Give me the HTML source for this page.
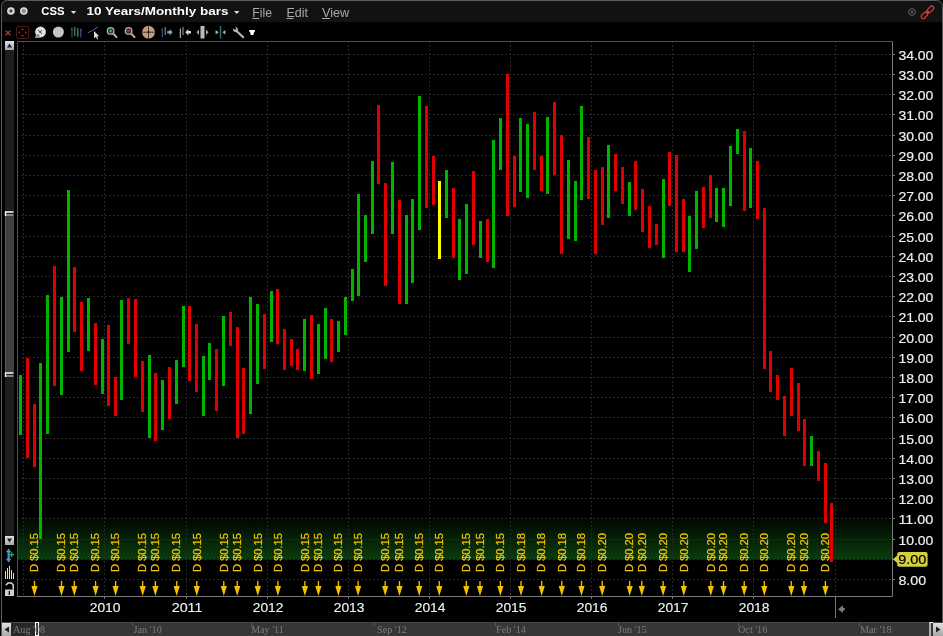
<!DOCTYPE html><html><head><meta charset="utf-8"><style>html,body{margin:0;padding:0;background:#000;width:943px;height:636px;overflow:hidden}svg{display:block;will-change:transform}text{font-family:"Liberation Sans",sans-serif}text.serif{font-family:"Liberation Serif",serif}</style></head><body>
<svg width="943" height="636" viewBox="0 0 943 636">
<defs><linearGradient id="band" x1="0" y1="0" x2="0" y2="1"><stop offset="0" stop-color="#010701"/><stop offset="1" stop-color="#0a3c0e"/></linearGradient><linearGradient id="btn" x1="0" y1="0" x2="0" y2="1"><stop offset="0" stop-color="#e0e0e0"/><stop offset="1" stop-color="#a8a8a8"/></linearGradient><radialGradient id="wbtn" cx="0.5" cy="0.4" r="0.6"><stop offset="0" stop-color="#c8c8c8"/><stop offset="1" stop-color="#707070"/></radialGradient></defs>
<rect width="943" height="636" fill="#000"/>
<path d="M1.5 636 V6.5 Q1.5 0.5 7.5 0.5 H936.5 Q942.5 0.5 942.5 6.5 V636" fill="#121212" stroke="#5c5c5c" stroke-width="1"/>
<rect x="2" y="22" width="940" height="614" fill="#000"/>
<circle cx="10.9" cy="11" r="3.8" fill="#dcdcdc"/><circle cx="10.9" cy="11" r="2.2" fill="#9a9a9a"/><rect x="10" y="10.1" width="1.8" height="1.8" fill="#2a2a2a"/>
<circle cx="23.8" cy="11" r="3.8" fill="#dcdcdc"/><circle cx="23.8" cy="11" r="2.3" fill="#8e8e8e"/>
<text x="41.3" y="15.3" font-weight="bold" font-size="11.6" fill="#fff" textLength="23.2" lengthAdjust="spacingAndGlyphs">CSS</text>
<path d="M70.8 11 H76.3 L73.55 14 Z" fill="#ddd"/>
<text x="86.5" y="15.3" font-weight="bold" font-size="11.8" fill="#fff" textLength="142" lengthAdjust="spacingAndGlyphs">10 Years/Monthly bars</text>
<path d="M234 11 H239.5 L236.75 14 Z" fill="#ddd"/>
<text x="252.3" y="16.5" font-size="12" fill="#a8a8a8" textLength="19.7" lengthAdjust="spacingAndGlyphs">File</text>
<rect x="252.3" y="18" width="7" height="1" fill="#a8a8a8"/>
<text x="286.5" y="16.5" font-size="12" fill="#a8a8a8" textLength="21.5" lengthAdjust="spacingAndGlyphs">Edit</text>
<rect x="286.5" y="18" width="7" height="1" fill="#a8a8a8"/>
<text x="322" y="16.5" font-size="12" fill="#a8a8a8" textLength="27.3" lengthAdjust="spacingAndGlyphs">View</text>
<rect x="322" y="18" width="8" height="1" fill="#a8a8a8"/>
<g fill="none" stroke="#6a6a6a" stroke-width="0.9"><circle cx="912" cy="12" r="3.4"/><circle cx="912" cy="12" r="1.2"/></g>
<g fill="none" stroke="#e04848" stroke-width="1.1"><rect x="-2" y="-4" width="4" height="8" rx="2" transform="translate(924.6 15.2) rotate(45)"/><rect x="-2" y="-4" width="4" height="8" rx="2" transform="translate(930.4 9.4) rotate(45)"/><path d="M926.2 13.6 L928.8 11"/></g>
<g>
<path d="M5.5 30.5 L10.5 35.5 M10.5 30.5 L5.5 35.5" stroke="#9a3c3c" stroke-width="1.4"/>
<rect x="16.5" y="26.5" width="12" height="12" rx="1.5" fill="none" stroke="#4a1818"/>
<path d="M22.5 28 L21 30 H24 Z M22.5 37 L21 35 H24 Z M18 32.5 L20 31 V34 Z M27 32.5 L25 31 V34 Z" fill="#8a2a2a"/>
<circle cx="40.5" cy="32" r="5.4" fill="#d8e2ea"/><path d="M38 30 L42 34 M42 30 L39.5 32.5" stroke="#333" stroke-width="0.9"/><path d="M35 38 Q35.5 33.5 39 34 L40 38 Z" fill="#c08a66"/>
<circle cx="58.4" cy="32" r="5.5" fill="#c4c4c4"/>
<path d="M72 27.5 V37.5 M80.8 28.5 V37.5" stroke="#4060a8" stroke-width="1"/><path d="M74.8 27 V36 M77.8 28 V37" stroke="#5a9a5a" stroke-width="1.1"/><path d="M71 29 H72 M80.8 30 H82 M73.8 30 H74.8 M77.8 34 H78.8" stroke="#6a8ac0" stroke-width="0.8"/>
<path d="M88 33 L98 27" stroke="#4a6a90" stroke-width="1"/><path d="M94 31 V38.5 L95.8 36.8 L97.2 39.5 L98.2 39 L96.9 36.4 L99.2 36.2 Z" fill="#ddd"/>
<path d="M113.2 33.6 L117 37.6" stroke="#d8b088" stroke-width="2"/><circle cx="110.6" cy="30.9" r="3.3" fill="#2a3434" stroke="#a8b0b0" stroke-width="1.3"/><path d="M109.1 30.9 H112.1 M110.6 29.4 V32.4" stroke="#38b838" stroke-width="1.1"/>
<path d="M131.2 33.6 L135 37.6" stroke="#d8b088" stroke-width="2"/><circle cx="128.6" cy="30.9" r="3.3" fill="#343030" stroke="#a8b0b0" stroke-width="1.3"/><path d="M126.9 30.9 H130.3" stroke="#c84030" stroke-width="1.3"/>
<circle cx="148.5" cy="32.2" r="6.4" fill="#c89c80"/><path d="M148.5 26.2 V38.2 M142.5 32.2 H154.5" stroke="#2a1e18" stroke-width="0.8"/><circle cx="148.5" cy="32.2" r="1" fill="#111"/>
<path d="M162.3 28.5 V37" stroke="#4a62b0" stroke-width="1"/><path d="M161.5 29.5 H162.3 M162.3 36 H163" stroke="#4a62b0" stroke-width="0.8"/><path d="M165.2 27 V35" stroke="#5e9a60" stroke-width="1.2"/><path d="M167.3 31 H169.8 V29 L172.5 32.3 L169.8 35.5 V33.5 H167.3 Z" fill="#8aa4c0"/>
<path d="M180.3 28.5 V38" stroke="#cfcfcf" stroke-width="1"/><path d="M183 27 V35" stroke="#8a8a8a" stroke-width="1.2"/><path d="M191 31 H188.3 V29 L185.3 32.3 L188.3 35.5 V33.5 H191 Z" fill="#d8d8d8"/>
<rect x="200.5" y="26" width="4" height="12.5" fill="#bbb"/><path d="M199 29.5 L196.5 32.2 L199 35 Z M206 29.5 L208.5 32.2 L206 35 Z" fill="#aaa"/>
<path d="M220.5 26 V38.5" stroke="#3a6a84" stroke-width="1.4"/><path d="M215.6 30 L218.6 32.2 L215.6 34.4 Z M225.4 30 L222.4 32.2 L225.4 34.4 Z" fill="#98c498"/>
<path d="M236.5 31 L243.2 37.2" stroke="#b4b8c4" stroke-width="2.2" stroke-linecap="round"/><path d="M233 28.8 Q232.8 32 236 32.2 Q238.2 32 238 29.4 Q237.6 27.2 235 26.8 L236.2 28.6 L235.2 30 L233.2 28.4 Z" fill="#b4b8c4"/>
<path d="M249.2 30 H255 V31.7 H254.2 L253.4 34.9 H250.8 L250 31.7 H249.2 Z" fill="#fff"/>
</g>
<rect x="5" y="50" width="9" height="486" fill="#1e1e1e"/>
<rect x="5" y="216" width="9" height="156" fill="#404040"/><rect x="5" y="216" width="1" height="156" fill="#5a5a5a"/>
<path d="M5.5 216 V212 H13.5" stroke="#fff" stroke-width="1.4" fill="none"/><path d="M6 215 H13.5" stroke="#c8c8c8" stroke-width="1.2"/>
<path d="M5.5 377 V373 H13.5" stroke="#fff" stroke-width="1.4" fill="none"/><path d="M6 376 H13.5" stroke="#c8c8c8" stroke-width="1.2"/>
<rect x="5" y="41" width="9" height="9" fill="url(#btn)"/><path d="M7 47.5 H12 L9.5 43.5 Z" fill="#10203a"/>
<rect x="5" y="536" width="9" height="9" fill="url(#btn)"/><path d="M7 538.5 H12 L9.5 542.5 Z" fill="#10203a"/>
<path d="M8.6 548.5 L5.8 552.3 H7.5 V558.7 H5.8 L8.6 562.5 L11.4 558.7 H9.7 V552.3 H11.4 Z" fill="#4a94d8"/><path d="M9.3 554.6 H14 M11.65 552.3 V556.9" stroke="#18c038" stroke-width="1.3"/>
<path d="M5.5 579 V571 M7.5 579 V568 M9.5 579 V566 M11.5 579 V570 M13.5 579 V573" stroke="#ddd" stroke-width="1"/>
<rect x="5" y="589.5" width="9" height="6.5" fill="#d0d0d0"/><rect x="8.7" y="591" width="1.3" height="4" fill="#111"/><path d="M5.8 585.2 L8 583 H11.4 L13.2 584.8 V589.5" stroke="#d8d8d8" stroke-width="1.5" fill="none"/>
<rect x="18" y="518.8" width="874" height="40.6" fill="url(#band)"/>
<path d="M18 579.5 H892 M18 559.5 H892 M18 539.5 H892 M18 518.5 H892 M18 498.5 H892 M18 478.5 H892 M18 458.5 H892 M18 438.5 H892 M18 417.5 H892 M18 397.5 H892 M18 377.5 H892 M18 357.5 H892 M18 337.5 H892 M18 316.5 H892 M18 296.5 H892 M18 276.5 H892 M18 256.5 H892 M18 236.5 H892 M18 215.5 H892 M18 195.5 H892 M18 175.5 H892 M18 155.5 H892 M18 135.5 H892 M18 114.5 H892 M18 94.5 H892 M18 74.5 H892 M18 54.5 H892" stroke="#282828" stroke-width="1" stroke-dasharray="2 2" stroke-dashoffset="1"/>
<path d="M23.5 42 V596 M104.5 42 V596 M186.5 42 V596 M267.5 42 V596 M348.5 42 V596 M429.5 42 V596 M510.5 42 V596 M591.5 42 V596 M672.5 42 V596 M753.5 42 V596 M835.5 42 V596" stroke="#282828" stroke-width="1" stroke-dasharray="2 2" stroke-dashoffset="1"/>
<g fill="#00b400"><rect x="19" y="375" width="3" height="60"/><rect x="39" y="363" width="3" height="176"/><rect x="46" y="295" width="3" height="139"/><rect x="60" y="297" width="3" height="98"/><rect x="67" y="190" width="3" height="162"/><rect x="87" y="298" width="3" height="53"/><rect x="101" y="339" width="3" height="55"/><rect x="120" y="300" width="3" height="100"/><rect x="148" y="355" width="3" height="83"/><rect x="161" y="380" width="3" height="50"/><rect x="175" y="360" width="3" height="44"/><rect x="182" y="306" width="3" height="61"/><rect x="202" y="356" width="3" height="60"/><rect x="208" y="343" width="3" height="37"/><rect x="222" y="316" width="3" height="70"/><rect x="249" y="297" width="3" height="117"/><rect x="256" y="304" width="3" height="80"/><rect x="270" y="291" width="3" height="51"/><rect x="303" y="319" width="3" height="52"/><rect x="317" y="324" width="3" height="50"/><rect x="324" y="308" width="3" height="51"/><rect x="337" y="321" width="3" height="31"/><rect x="344" y="297" width="3" height="38"/><rect x="351" y="269" width="3" height="32"/><rect x="357" y="194" width="3" height="102"/><rect x="364" y="215" width="3" height="47"/><rect x="371" y="161" width="3" height="73"/><rect x="391" y="162" width="3" height="72"/><rect x="405" y="215" width="3" height="89"/><rect x="411" y="199" width="3" height="84"/><rect x="418" y="96" width="3" height="134"/><rect x="445" y="170" width="3" height="48"/><rect x="458" y="219" width="3" height="61"/><rect x="465" y="204" width="3" height="70"/><rect x="479" y="221" width="3" height="37"/><rect x="492" y="140" width="3" height="128"/><rect x="499" y="118" width="3" height="52"/><rect x="519" y="118" width="3" height="74"/><rect x="526" y="124" width="3" height="74"/><rect x="546" y="117" width="3" height="77"/><rect x="567" y="160" width="3" height="79"/><rect x="574" y="181" width="3" height="60"/><rect x="580" y="106" width="3" height="94"/><rect x="607" y="145" width="3" height="73"/><rect x="628" y="182" width="3" height="34"/><rect x="662" y="179" width="3" height="79"/><rect x="688" y="216" width="3" height="56"/><rect x="695" y="191" width="3" height="58"/><rect x="715" y="188" width="3" height="34"/><rect x="722" y="188" width="3" height="39"/><rect x="729" y="146" width="3" height="60"/><rect x="736" y="129" width="3" height="25"/><rect x="749" y="148" width="3" height="60"/><rect x="810" y="436" width="3" height="30"/></g>
<g fill="#e00000"><rect x="26" y="358" width="3" height="100"/><rect x="33" y="404" width="3" height="63"/><rect x="53" y="266" width="3" height="120"/><rect x="73" y="267" width="3" height="65"/><rect x="80" y="302" width="3" height="69"/><rect x="94" y="323" width="3" height="62"/><rect x="107" y="325" width="3" height="81"/><rect x="114" y="377" width="3" height="39"/><rect x="127" y="298" width="3" height="46"/><rect x="134" y="299" width="3" height="78"/><rect x="141" y="361" width="3" height="51"/><rect x="154" y="373" width="3" height="68"/><rect x="168" y="367" width="3" height="52"/><rect x="188" y="306" width="3" height="75"/><rect x="195" y="324" width="3" height="68"/><rect x="215" y="349" width="3" height="62"/><rect x="229" y="312" width="3" height="34"/><rect x="236" y="327" width="3" height="111"/><rect x="242" y="368" width="3" height="66"/><rect x="263" y="314" width="3" height="55"/><rect x="276" y="289" width="3" height="55"/><rect x="283" y="329" width="3" height="41"/><rect x="290" y="339" width="3" height="27"/><rect x="296" y="349" width="3" height="21"/><rect x="310" y="315" width="3" height="64"/><rect x="330" y="319" width="3" height="43"/><rect x="377" y="105" width="3" height="79"/><rect x="384" y="183" width="3" height="103"/><rect x="398" y="200" width="3" height="104"/><rect x="425" y="106" width="3" height="102"/><rect x="432" y="156" width="3" height="49"/><rect x="452" y="188" width="3" height="70"/><rect x="472" y="171" width="3" height="74"/><rect x="486" y="219" width="3" height="43"/><rect x="506" y="74" width="3" height="142"/><rect x="513" y="156" width="3" height="51"/><rect x="533" y="112" width="3" height="58"/><rect x="540" y="156" width="3" height="35"/><rect x="553" y="102" width="3" height="73"/><rect x="560" y="135" width="3" height="119"/><rect x="587" y="137" width="3" height="62"/><rect x="594" y="170" width="3" height="84"/><rect x="601" y="167" width="3" height="58"/><rect x="614" y="154" width="3" height="37"/><rect x="621" y="167" width="3" height="37"/><rect x="634" y="161" width="3" height="49"/><rect x="641" y="189" width="3" height="43"/><rect x="648" y="206" width="3" height="42"/><rect x="655" y="224" width="3" height="21"/><rect x="668" y="152" width="3" height="54"/><rect x="675" y="155" width="3" height="97"/><rect x="682" y="199" width="3" height="53"/><rect x="702" y="187" width="3" height="41"/><rect x="709" y="175" width="3" height="43"/><rect x="743" y="131" width="3" height="80"/><rect x="756" y="161" width="3" height="58"/><rect x="763" y="208" width="3" height="161"/><rect x="769" y="351" width="3" height="41"/><rect x="776" y="375" width="3" height="25"/><rect x="783" y="396" width="3" height="40"/><rect x="790" y="368" width="3" height="48"/><rect x="797" y="383" width="3" height="48"/><rect x="803" y="419" width="3" height="47"/><rect x="817" y="451" width="3" height="30"/><rect x="824" y="463" width="3" height="60"/><rect x="830" y="503" width="3" height="59"/></g>
<g fill="#ffff00"><rect x="438" y="181" width="3" height="78"/></g>
<text transform="translate(38.2 572) rotate(-90)" font-size="10.5" fill="#f2c200" stroke="#f2c200" stroke-width="0.25" textLength="39" lengthAdjust="spacingAndGlyphs">D $0.15</text>
<path d="M33.85 581 H35.15 V586 H37.6 L34.5 596 L31.4 586 H33.85 Z" fill="#f2c200"/>
<text transform="translate(65.2 572) rotate(-90)" font-size="10.5" fill="#f2c200" stroke="#f2c200" stroke-width="0.25" textLength="39" lengthAdjust="spacingAndGlyphs">D $0.15</text>
<path d="M60.85 581 H62.15 V586 H64.6 L61.5 596 L58.4 586 H60.85 Z" fill="#f2c200"/>
<text transform="translate(78.0 572) rotate(-90)" font-size="10.5" fill="#f2c200" stroke="#f2c200" stroke-width="0.25" textLength="39" lengthAdjust="spacingAndGlyphs">D $0.15</text>
<path d="M73.65 581 H74.95000000000002 V586 H77.4 L74.30000000000001 596 L71.20000000000002 586 H73.65 Z" fill="#f2c200"/>
<text transform="translate(99.3 572) rotate(-90)" font-size="10.5" fill="#f2c200" stroke="#f2c200" stroke-width="0.25" textLength="39" lengthAdjust="spacingAndGlyphs">D $0.15</text>
<path d="M94.95 581 H96.25000000000001 V586 H98.7 L95.60000000000001 596 L92.50000000000001 586 H94.95 Z" fill="#f2c200"/>
<text transform="translate(119.3 572) rotate(-90)" font-size="10.5" fill="#f2c200" stroke="#f2c200" stroke-width="0.25" textLength="39" lengthAdjust="spacingAndGlyphs">D $0.15</text>
<path d="M114.95 581 H116.25000000000001 V586 H118.7 L115.60000000000001 596 L112.50000000000001 586 H114.95 Z" fill="#f2c200"/>
<text transform="translate(146.4 572) rotate(-90)" font-size="10.5" fill="#f2c200" stroke="#f2c200" stroke-width="0.25" textLength="39" lengthAdjust="spacingAndGlyphs">D $0.15</text>
<path d="M142.05 581 H143.35000000000002 V586 H145.8 L142.70000000000002 596 L139.60000000000002 586 H142.05 Z" fill="#f2c200"/>
<text transform="translate(159.1 572) rotate(-90)" font-size="10.5" fill="#f2c200" stroke="#f2c200" stroke-width="0.25" textLength="39" lengthAdjust="spacingAndGlyphs">D $0.15</text>
<path d="M154.75 581 H156.05 V586 H158.5 L155.4 596 L152.3 586 H154.75 Z" fill="#f2c200"/>
<text transform="translate(180.4 572) rotate(-90)" font-size="10.5" fill="#f2c200" stroke="#f2c200" stroke-width="0.25" textLength="39" lengthAdjust="spacingAndGlyphs">D $0.15</text>
<path d="M176.05 581 H177.35000000000002 V586 H179.8 L176.70000000000002 596 L173.60000000000002 586 H176.05 Z" fill="#f2c200"/>
<text transform="translate(200.5 572) rotate(-90)" font-size="10.5" fill="#f2c200" stroke="#f2c200" stroke-width="0.25" textLength="39" lengthAdjust="spacingAndGlyphs">D $0.15</text>
<path d="M196.15 581 H197.45000000000002 V586 H199.9 L196.8 596 L193.70000000000002 586 H196.15 Z" fill="#f2c200"/>
<text transform="translate(227.5 572) rotate(-90)" font-size="10.5" fill="#f2c200" stroke="#f2c200" stroke-width="0.25" textLength="39" lengthAdjust="spacingAndGlyphs">D $0.15</text>
<path d="M223.15 581 H224.45000000000002 V586 H226.9 L223.8 596 L220.70000000000002 586 H223.15 Z" fill="#f2c200"/>
<text transform="translate(240.9 572) rotate(-90)" font-size="10.5" fill="#f2c200" stroke="#f2c200" stroke-width="0.25" textLength="39" lengthAdjust="spacingAndGlyphs">D $0.15</text>
<path d="M236.55 581 H237.85000000000002 V586 H240.3 L237.20000000000002 596 L234.10000000000002 586 H236.55 Z" fill="#f2c200"/>
<text transform="translate(261.5 572) rotate(-90)" font-size="10.5" fill="#f2c200" stroke="#f2c200" stroke-width="0.25" textLength="39" lengthAdjust="spacingAndGlyphs">D $0.15</text>
<path d="M257.15 581 H258.44999999999993 V586 H260.9 L257.79999999999995 596 L254.69999999999996 586 H257.15 Z" fill="#f2c200"/>
<text transform="translate(281.6 572) rotate(-90)" font-size="10.5" fill="#f2c200" stroke="#f2c200" stroke-width="0.25" textLength="39" lengthAdjust="spacingAndGlyphs">D $0.15</text>
<path d="M277.25 581 H278.54999999999995 V586 H281.0 L277.9 596 L274.79999999999995 586 H277.25 Z" fill="#f2c200"/>
<text transform="translate(308.6 572) rotate(-90)" font-size="10.5" fill="#f2c200" stroke="#f2c200" stroke-width="0.25" textLength="39" lengthAdjust="spacingAndGlyphs">D $0.15</text>
<path d="M304.25 581 H305.54999999999995 V586 H308.0 L304.9 596 L301.79999999999995 586 H304.25 Z" fill="#f2c200"/>
<text transform="translate(322.1 572) rotate(-90)" font-size="10.5" fill="#f2c200" stroke="#f2c200" stroke-width="0.25" textLength="39" lengthAdjust="spacingAndGlyphs">D $0.15</text>
<path d="M317.75 581 H319.04999999999995 V586 H321.5 L318.4 596 L315.29999999999995 586 H317.75 Z" fill="#f2c200"/>
<text transform="translate(342.1 572) rotate(-90)" font-size="10.5" fill="#f2c200" stroke="#f2c200" stroke-width="0.25" textLength="39" lengthAdjust="spacingAndGlyphs">D $0.15</text>
<path d="M337.75 581 H339.04999999999995 V586 H341.5 L338.4 596 L335.29999999999995 586 H337.75 Z" fill="#f2c200"/>
<text transform="translate(361.8 572) rotate(-90)" font-size="10.5" fill="#f2c200" stroke="#f2c200" stroke-width="0.25" textLength="39" lengthAdjust="spacingAndGlyphs">D $0.15</text>
<path d="M357.45 581 H358.74999999999994 V586 H361.2 L358.09999999999997 596 L354.99999999999994 586 H357.45 Z" fill="#f2c200"/>
<text transform="translate(388.90000000000003 572) rotate(-90)" font-size="10.5" fill="#f2c200" stroke="#f2c200" stroke-width="0.25" textLength="39" lengthAdjust="spacingAndGlyphs">D $0.15</text>
<path d="M384.55 581 H385.84999999999997 V586 H388.3 L385.2 596 L382.09999999999997 586 H384.55 Z" fill="#f2c200"/>
<text transform="translate(403.20000000000005 572) rotate(-90)" font-size="10.5" fill="#f2c200" stroke="#f2c200" stroke-width="0.25" textLength="39" lengthAdjust="spacingAndGlyphs">D $0.15</text>
<path d="M398.85 581 H400.15 V586 H402.6 L399.5 596 L396.4 586 H398.85 Z" fill="#f2c200"/>
<text transform="translate(422.90000000000003 572) rotate(-90)" font-size="10.5" fill="#f2c200" stroke="#f2c200" stroke-width="0.25" textLength="39" lengthAdjust="spacingAndGlyphs">D $0.15</text>
<path d="M418.55 581 H419.84999999999997 V586 H422.3 L419.2 596 L416.09999999999997 586 H418.55 Z" fill="#f2c200"/>
<text transform="translate(443.0 572) rotate(-90)" font-size="10.5" fill="#f2c200" stroke="#f2c200" stroke-width="0.25" textLength="39" lengthAdjust="spacingAndGlyphs">D $0.15</text>
<path d="M438.65 581 H439.94999999999993 V586 H442.4 L439.29999999999995 596 L436.19999999999993 586 H438.65 Z" fill="#f2c200"/>
<text transform="translate(470.0 572) rotate(-90)" font-size="10.5" fill="#f2c200" stroke="#f2c200" stroke-width="0.25" textLength="39" lengthAdjust="spacingAndGlyphs">D $0.15</text>
<path d="M465.65 581 H466.94999999999993 V586 H469.4 L466.29999999999995 596 L463.19999999999993 586 H465.65 Z" fill="#f2c200"/>
<text transform="translate(483.70000000000005 572) rotate(-90)" font-size="10.5" fill="#f2c200" stroke="#f2c200" stroke-width="0.25" textLength="39" lengthAdjust="spacingAndGlyphs">D $0.15</text>
<path d="M479.35 581 H480.65 V586 H483.1 L480.0 596 L476.9 586 H479.35 Z" fill="#f2c200"/>
<text transform="translate(504.1 572) rotate(-90)" font-size="10.5" fill="#f2c200" stroke="#f2c200" stroke-width="0.25" textLength="39" lengthAdjust="spacingAndGlyphs">D $0.15</text>
<path d="M499.75 581 H501.04999999999995 V586 H503.5 L500.4 596 L497.29999999999995 586 H499.75 Z" fill="#f2c200"/>
<text transform="translate(524.7 572) rotate(-90)" font-size="10.5" fill="#f2c200" stroke="#f2c200" stroke-width="0.25" textLength="39" lengthAdjust="spacingAndGlyphs">D $0.18</text>
<path d="M520.35 581 H521.65 V586 H524.1 L521.0 596 L517.9 586 H520.35 Z" fill="#f2c200"/>
<text transform="translate(545.4 572) rotate(-90)" font-size="10.5" fill="#f2c200" stroke="#f2c200" stroke-width="0.25" textLength="39" lengthAdjust="spacingAndGlyphs">D $0.18</text>
<path d="M541.05 581 H542.3499999999999 V586 H544.8 L541.6999999999999 596 L538.5999999999999 586 H541.05 Z" fill="#f2c200"/>
<text transform="translate(565.5 572) rotate(-90)" font-size="10.5" fill="#f2c200" stroke="#f2c200" stroke-width="0.25" textLength="39" lengthAdjust="spacingAndGlyphs">D $0.18</text>
<path d="M561.15 581 H562.4499999999999 V586 H564.9 L561.8 596 L558.6999999999999 586 H561.15 Z" fill="#f2c200"/>
<text transform="translate(585.2 572) rotate(-90)" font-size="10.5" fill="#f2c200" stroke="#f2c200" stroke-width="0.25" textLength="39" lengthAdjust="spacingAndGlyphs">D $0.18</text>
<path d="M580.85 581 H582.15 V586 H584.6 L581.5 596 L578.4 586 H580.85 Z" fill="#f2c200"/>
<text transform="translate(605.9 572) rotate(-90)" font-size="10.5" fill="#f2c200" stroke="#f2c200" stroke-width="0.25" textLength="39" lengthAdjust="spacingAndGlyphs">D $0.20</text>
<path d="M601.55 581 H602.8499999999999 V586 H605.3 L602.1999999999999 596 L599.0999999999999 586 H601.55 Z" fill="#f2c200"/>
<text transform="translate(633.4 572) rotate(-90)" font-size="10.5" fill="#f2c200" stroke="#f2c200" stroke-width="0.25" textLength="39" lengthAdjust="spacingAndGlyphs">D $0.20</text>
<path d="M629.05 581 H630.3499999999999 V586 H632.8 L629.6999999999999 596 L626.5999999999999 586 H629.05 Z" fill="#f2c200"/>
<text transform="translate(645.5 572) rotate(-90)" font-size="10.5" fill="#f2c200" stroke="#f2c200" stroke-width="0.25" textLength="39" lengthAdjust="spacingAndGlyphs">D $0.20</text>
<path d="M641.15 581 H642.4499999999999 V586 H644.9 L641.8 596 L638.6999999999999 586 H641.15 Z" fill="#f2c200"/>
<text transform="translate(666.8000000000001 572) rotate(-90)" font-size="10.5" fill="#f2c200" stroke="#f2c200" stroke-width="0.25" textLength="39" lengthAdjust="spacingAndGlyphs">D $0.20</text>
<path d="M662.45 581 H663.75 V586 H666.2 L663.1 596 L660.0 586 H662.45 Z" fill="#f2c200"/>
<text transform="translate(687.5 572) rotate(-90)" font-size="10.5" fill="#f2c200" stroke="#f2c200" stroke-width="0.25" textLength="39" lengthAdjust="spacingAndGlyphs">D $0.20</text>
<path d="M683.15 581 H684.4499999999999 V586 H686.9 L683.8 596 L680.6999999999999 586 H683.15 Z" fill="#f2c200"/>
<text transform="translate(714.5 572) rotate(-90)" font-size="10.5" fill="#f2c200" stroke="#f2c200" stroke-width="0.25" textLength="39" lengthAdjust="spacingAndGlyphs">D $0.20</text>
<path d="M710.15 581 H711.4499999999999 V586 H713.9 L710.8 596 L707.6999999999999 586 H710.15 Z" fill="#f2c200"/>
<text transform="translate(727.2 572) rotate(-90)" font-size="10.5" fill="#f2c200" stroke="#f2c200" stroke-width="0.25" textLength="39" lengthAdjust="spacingAndGlyphs">D $0.20</text>
<path d="M722.85 581 H724.15 V586 H726.6 L723.5 596 L720.4 586 H722.85 Z" fill="#f2c200"/>
<text transform="translate(747.9 572) rotate(-90)" font-size="10.5" fill="#f2c200" stroke="#f2c200" stroke-width="0.25" textLength="39" lengthAdjust="spacingAndGlyphs">D $0.20</text>
<path d="M743.55 581 H744.8499999999999 V586 H747.3 L744.1999999999999 596 L741.0999999999999 586 H743.55 Z" fill="#f2c200"/>
<text transform="translate(768.0 572) rotate(-90)" font-size="10.5" fill="#f2c200" stroke="#f2c200" stroke-width="0.25" textLength="39" lengthAdjust="spacingAndGlyphs">D $0.20</text>
<path d="M763.65 581 H764.9499999999999 V586 H767.4 L764.3 596 L761.1999999999999 586 H763.65 Z" fill="#f2c200"/>
<text transform="translate(795.0 572) rotate(-90)" font-size="10.5" fill="#f2c200" stroke="#f2c200" stroke-width="0.25" textLength="39" lengthAdjust="spacingAndGlyphs">D $0.20</text>
<path d="M790.65 581 H791.9499999999999 V586 H794.4 L791.3 596 L788.1999999999999 586 H790.65 Z" fill="#f2c200"/>
<text transform="translate(807.7 572) rotate(-90)" font-size="10.5" fill="#f2c200" stroke="#f2c200" stroke-width="0.25" textLength="39" lengthAdjust="spacingAndGlyphs">D $0.20</text>
<path d="M803.35 581 H804.65 V586 H807.1 L804.0 596 L800.9 586 H803.35 Z" fill="#f2c200"/>
<text transform="translate(829.1 572) rotate(-90)" font-size="10.5" fill="#f2c200" stroke="#f2c200" stroke-width="0.25" textLength="39" lengthAdjust="spacingAndGlyphs">D $0.20</text>
<path d="M824.75 581 H826.05 V586 H828.5 L825.4 596 L822.3 586 H824.75 Z" fill="#f2c200"/>
<path d="M17.5 596 V41.5 H893" fill="none" stroke="#505050" stroke-width="1"/><path d="M17 596.5 H892.5 V42" fill="none" stroke="#7a7a7a" stroke-width="1"/>
<text x="898.4" y="584.7" font-size="12.5" fill="#f2f2f2" stroke="#f2f2f2" stroke-width="0.15" textLength="27.8" lengthAdjust="spacingAndGlyphs">8.00</text>
<text x="898.4" y="544.7" font-size="12.5" fill="#f2f2f2" stroke="#f2f2f2" stroke-width="0.15" textLength="35" lengthAdjust="spacingAndGlyphs">10.00</text>
<text x="898.4" y="523.7" font-size="12.5" fill="#f2f2f2" stroke="#f2f2f2" stroke-width="0.15" textLength="35" lengthAdjust="spacingAndGlyphs">11.00</text>
<text x="898.4" y="503.7" font-size="12.5" fill="#f2f2f2" stroke="#f2f2f2" stroke-width="0.15" textLength="35" lengthAdjust="spacingAndGlyphs">12.00</text>
<text x="898.4" y="483.7" font-size="12.5" fill="#f2f2f2" stroke="#f2f2f2" stroke-width="0.15" textLength="35" lengthAdjust="spacingAndGlyphs">13.00</text>
<text x="898.4" y="463.7" font-size="12.5" fill="#f2f2f2" stroke="#f2f2f2" stroke-width="0.15" textLength="35" lengthAdjust="spacingAndGlyphs">14.00</text>
<text x="898.4" y="443.7" font-size="12.5" fill="#f2f2f2" stroke="#f2f2f2" stroke-width="0.15" textLength="35" lengthAdjust="spacingAndGlyphs">15.00</text>
<text x="898.4" y="422.7" font-size="12.5" fill="#f2f2f2" stroke="#f2f2f2" stroke-width="0.15" textLength="35" lengthAdjust="spacingAndGlyphs">16.00</text>
<text x="898.4" y="402.7" font-size="12.5" fill="#f2f2f2" stroke="#f2f2f2" stroke-width="0.15" textLength="35" lengthAdjust="spacingAndGlyphs">17.00</text>
<text x="898.4" y="382.7" font-size="12.5" fill="#f2f2f2" stroke="#f2f2f2" stroke-width="0.15" textLength="35" lengthAdjust="spacingAndGlyphs">18.00</text>
<text x="898.4" y="362.7" font-size="12.5" fill="#f2f2f2" stroke="#f2f2f2" stroke-width="0.15" textLength="35" lengthAdjust="spacingAndGlyphs">19.00</text>
<text x="898.4" y="342.7" font-size="12.5" fill="#f2f2f2" stroke="#f2f2f2" stroke-width="0.15" textLength="35" lengthAdjust="spacingAndGlyphs">20.00</text>
<text x="898.4" y="321.7" font-size="12.5" fill="#f2f2f2" stroke="#f2f2f2" stroke-width="0.15" textLength="35" lengthAdjust="spacingAndGlyphs">21.00</text>
<text x="898.4" y="301.7" font-size="12.5" fill="#f2f2f2" stroke="#f2f2f2" stroke-width="0.15" textLength="35" lengthAdjust="spacingAndGlyphs">22.00</text>
<text x="898.4" y="281.7" font-size="12.5" fill="#f2f2f2" stroke="#f2f2f2" stroke-width="0.15" textLength="35" lengthAdjust="spacingAndGlyphs">23.00</text>
<text x="898.4" y="261.7" font-size="12.5" fill="#f2f2f2" stroke="#f2f2f2" stroke-width="0.15" textLength="35" lengthAdjust="spacingAndGlyphs">24.00</text>
<text x="898.4" y="241.7" font-size="12.5" fill="#f2f2f2" stroke="#f2f2f2" stroke-width="0.15" textLength="35" lengthAdjust="spacingAndGlyphs">25.00</text>
<text x="898.4" y="220.7" font-size="12.5" fill="#f2f2f2" stroke="#f2f2f2" stroke-width="0.15" textLength="35" lengthAdjust="spacingAndGlyphs">26.00</text>
<text x="898.4" y="200.7" font-size="12.5" fill="#f2f2f2" stroke="#f2f2f2" stroke-width="0.15" textLength="35" lengthAdjust="spacingAndGlyphs">27.00</text>
<text x="898.4" y="180.7" font-size="12.5" fill="#f2f2f2" stroke="#f2f2f2" stroke-width="0.15" textLength="35" lengthAdjust="spacingAndGlyphs">28.00</text>
<text x="898.4" y="160.7" font-size="12.5" fill="#f2f2f2" stroke="#f2f2f2" stroke-width="0.15" textLength="35" lengthAdjust="spacingAndGlyphs">29.00</text>
<text x="898.4" y="140.7" font-size="12.5" fill="#f2f2f2" stroke="#f2f2f2" stroke-width="0.15" textLength="35" lengthAdjust="spacingAndGlyphs">30.00</text>
<text x="898.4" y="119.7" font-size="12.5" fill="#f2f2f2" stroke="#f2f2f2" stroke-width="0.15" textLength="35" lengthAdjust="spacingAndGlyphs">31.00</text>
<text x="898.4" y="99.7" font-size="12.5" fill="#f2f2f2" stroke="#f2f2f2" stroke-width="0.15" textLength="35" lengthAdjust="spacingAndGlyphs">32.00</text>
<text x="898.4" y="79.7" font-size="12.5" fill="#f2f2f2" stroke="#f2f2f2" stroke-width="0.15" textLength="35" lengthAdjust="spacingAndGlyphs">33.00</text>
<text x="898.4" y="59.7" font-size="12.5" fill="#f2f2f2" stroke="#f2f2f2" stroke-width="0.15" textLength="35" lengthAdjust="spacingAndGlyphs">34.00</text>
<path d="M892 579.5 H895 M892 559.5 H895 M892 539.5 H895 M892 518.5 H895 M892 498.5 H895 M892 478.5 H895 M892 458.5 H895 M892 438.5 H895 M892 417.5 H895 M892 397.5 H895 M892 377.5 H895 M892 357.5 H895 M892 337.5 H895 M892 316.5 H895 M892 296.5 H895 M892 276.5 H895 M892 256.5 H895 M892 236.5 H895 M892 215.5 H895 M892 195.5 H895 M892 175.5 H895 M892 155.5 H895 M892 135.5 H895 M892 114.5 H895 M892 94.5 H895 M892 74.5 H895 M892 54.5 H895" stroke="#7a7a7a" stroke-width="1"/>
<path d="M893 559.3 L897.2 555.5 V554 Q897.2 552 899.2 552 H925.6 Q927.6 552 927.6 554 V564.8 Q927.6 566.8 925.6 566.8 H899.2 Q897.2 566.8 897.2 564.8 V563.1 Z" fill="#d4d03c"/>
<text x="898.2" y="564.2" font-size="12.5" fill="#000" stroke="#000" stroke-width="0.2" textLength="28" lengthAdjust="spacingAndGlyphs">9.00</text>
<path d="M104.5 596 V599 M186.5 596 V599 M267.5 596 V599 M348.5 596 V599 M429.5 596 V599 M510.5 596 V599 M591.5 596 V599 M672.5 596 V599 M753.5 596 V599" stroke="#7a7a7a" stroke-width="1"/>
<text x="105.1" y="612" font-size="12.5" fill="#f2f2f2" stroke="#f2f2f2" stroke-width="0.12" text-anchor="middle" textLength="30.8" lengthAdjust="spacingAndGlyphs">2010</text>
<text x="187.1" y="612" font-size="12.5" fill="#f2f2f2" stroke="#f2f2f2" stroke-width="0.12" text-anchor="middle" textLength="30.8" lengthAdjust="spacingAndGlyphs">2011</text>
<text x="268.1" y="612" font-size="12.5" fill="#f2f2f2" stroke="#f2f2f2" stroke-width="0.12" text-anchor="middle" textLength="30.8" lengthAdjust="spacingAndGlyphs">2012</text>
<text x="349.1" y="612" font-size="12.5" fill="#f2f2f2" stroke="#f2f2f2" stroke-width="0.12" text-anchor="middle" textLength="30.8" lengthAdjust="spacingAndGlyphs">2013</text>
<text x="430.1" y="612" font-size="12.5" fill="#f2f2f2" stroke="#f2f2f2" stroke-width="0.12" text-anchor="middle" textLength="30.8" lengthAdjust="spacingAndGlyphs">2014</text>
<text x="511.1" y="612" font-size="12.5" fill="#f2f2f2" stroke="#f2f2f2" stroke-width="0.12" text-anchor="middle" textLength="30.8" lengthAdjust="spacingAndGlyphs">2015</text>
<text x="592.1" y="612" font-size="12.5" fill="#f2f2f2" stroke="#f2f2f2" stroke-width="0.12" text-anchor="middle" textLength="30.8" lengthAdjust="spacingAndGlyphs">2016</text>
<text x="673.1" y="612" font-size="12.5" fill="#f2f2f2" stroke="#f2f2f2" stroke-width="0.12" text-anchor="middle" textLength="30.8" lengthAdjust="spacingAndGlyphs">2017</text>
<text x="754.1" y="612" font-size="12.5" fill="#f2f2f2" stroke="#f2f2f2" stroke-width="0.12" text-anchor="middle" textLength="30.8" lengthAdjust="spacingAndGlyphs">2018</text>
<rect x="835" y="596" width="1" height="22" fill="#777"/>
<path d="M838 609.2 L843 605.3 V607.9 H844.8 V610.5 H843 V613.1 Z" fill="#7a7a7a"/>
<rect x="2" y="622" width="941" height="14" fill="#363636"/><rect x="2" y="622" width="941" height="1" fill="#4a4a4a"/>
<rect x="11" y="623" width="24" height="13" fill="#282828"/><rect x="2" y="623" width="9" height="13" fill="url(#btn)"/><path d="M4.5 629.5 L9 626.5 V632.5 Z" fill="#10203a"/>
<rect x="933" y="623" width="10" height="13" fill="url(#btn)"/><path d="M940.5 629.5 L936 626.5 V632.5 Z" fill="#10203a"/>
<rect x="35.5" y="622.5" width="3" height="13" fill="none" stroke="#fff" stroke-width="1"/>
<path d="M930 636 V622.5 H933" fill="none" stroke="#fff" stroke-width="1.2"/>
<text x="13" y="633" class="serif" font-size="10.2" fill="#7c7c7c">Aug '08</text>
<text x="133.6" y="633" class="serif" font-size="10.2" fill="#7c7c7c">Jan '10</text>
<text x="251" y="633" class="serif" font-size="10.2" fill="#7c7c7c">May '11</text>
<text x="377" y="633" class="serif" font-size="10.2" fill="#7c7c7c">Sep '12</text>
<text x="496" y="633" class="serif" font-size="10.2" fill="#7c7c7c">Feb '14</text>
<text x="618" y="633" class="serif" font-size="10.2" fill="#7c7c7c">Jun '15</text>
<text x="738" y="633" class="serif" font-size="10.2" fill="#7c7c7c">Oct '16</text>
<text x="860" y="633" class="serif" font-size="10.2" fill="#7c7c7c">Mar '18</text>
<rect x="132.5" y="622" width="1" height="4" fill="#5a5a5a"/>
<rect x="251" y="622" width="1" height="4" fill="#5a5a5a"/>
<rect x="374" y="622" width="1" height="4" fill="#5a5a5a"/>
<rect x="495" y="622" width="1" height="4" fill="#5a5a5a"/>
<rect x="618" y="622" width="1" height="4" fill="#5a5a5a"/>
<rect x="738" y="622" width="1" height="4" fill="#5a5a5a"/>
<rect x="858.6" y="622" width="1" height="4" fill="#5a5a5a"/>
</svg></body></html>
